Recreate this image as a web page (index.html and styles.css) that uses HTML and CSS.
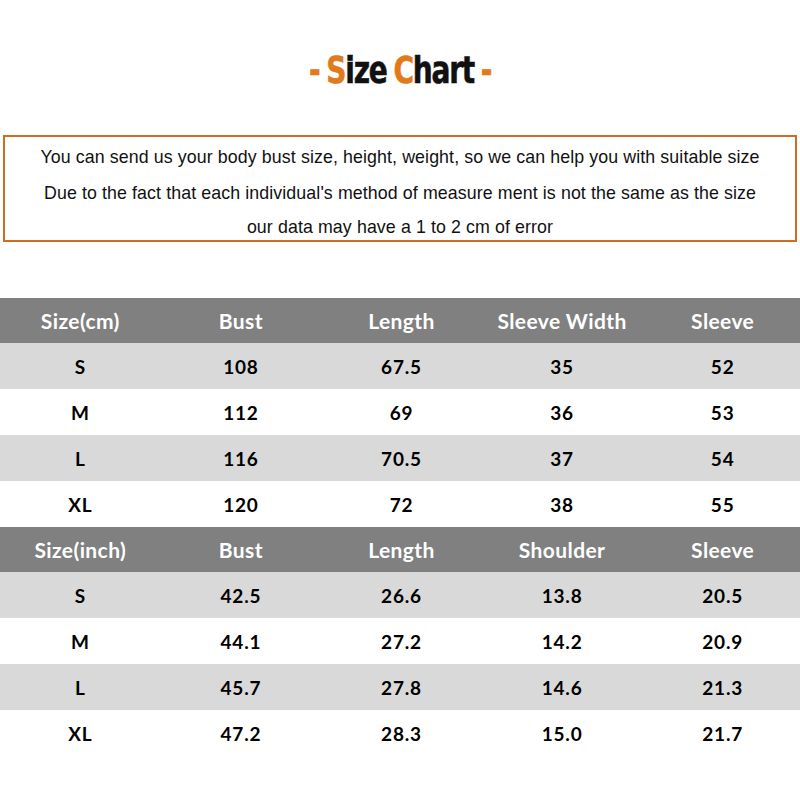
FILE: index.html
```html
<!DOCTYPE html>
<html>
<head>
<meta charset="utf-8">
<link rel="stylesheet" href="styles.css">
</head>
<body>
<div class="page">
  <div class="title-wrap">
    <h1 class="title"><span class="or">-</span> <span class="or">S</span>ize <span class="or">C</span>hart <span class="or">-</span></h1>
  </div>
  <div class="note">
    <p>You can send us your body bust size, height, weight, so we can help you with suitable size</p>
    <p>Due to the fact that each individual's method of measure ment is not the same as the size</p>
    <p>our data may have a 1 to 2 cm of error</p>
  </div>
  <div class="table">
    <div class="row head"><span>Size(cm)</span><span>Bust</span><span>Length</span><span>Sleeve Width</span><span>Sleeve</span></div>
    <div class="row alt"><span>S</span><span>108</span><span>67.5</span><span>35</span><span>52</span></div>
    <div class="row"><span>M</span><span>112</span><span>69</span><span>36</span><span>53</span></div>
    <div class="row alt"><span>L</span><span>116</span><span>70.5</span><span>37</span><span>54</span></div>
    <div class="row"><span>XL</span><span>120</span><span>72</span><span>38</span><span>55</span></div>
    <div class="row head"><span>Size(inch)</span><span>Bust</span><span>Length</span><span>Shoulder</span><span>Sleeve</span></div>
    <div class="row alt"><span>S</span><span>42.5</span><span>26.6</span><span>13.8</span><span>20.5</span></div>
    <div class="row"><span>M</span><span>44.1</span><span>27.2</span><span>14.2</span><span>20.9</span></div>
    <div class="row alt"><span>L</span><span>45.7</span><span>27.8</span><span>14.6</span><span>21.3</span></div>
    <div class="row"><span>XL</span><span>47.2</span><span>28.3</span><span>15.0</span><span>21.7</span></div>
  </div>
</div>
</body>
</html>
```

FILE: styles.css
```css
* { box-sizing: border-box; }
html, body { margin: 0; padding: 0; background: #fff; }
.page { width: 800px; height: 800px; overflow: hidden; display: flex; flex-direction: column; }
.title-wrap {
  height: 135px;
  padding-top: 45px;
  display: flex;
  justify-content: center;
  align-items: flex-start;
}
.title {
  margin: 0;
  font-family: "DejaVu Sans", sans-serif;
  font-stretch: condensed;
  font-weight: 900;
  font-size: 38px;
  line-height: 50px;
  color: #111;
  letter-spacing: -1.5px;
  word-spacing: -2px;
  transform: scaleX(0.82);
  white-space: nowrap;
  -webkit-text-stroke: 0.6px currentColor;
}
.title .or { color: #e07a1c; }
.note {
  margin: 0 3px;
  height: 107px;
  border: 2px solid #cf6d1f;
  display: flex;
  flex-direction: column;
  align-items: center;
  padding-top: 2px;
  font-family: "Liberation Sans", sans-serif;
  font-size: 17.8px;
  color: #111;
  letter-spacing: 0.1px;
}
.note p { margin: 0; line-height: 36px; height: 36px; }
.note p:last-child { height: auto; line-height: 32px; }
.table { margin-top: 56px; display: flex; flex-direction: column; }
.row {
  display: grid;
  grid-template-columns: repeat(5, 160.6px);
  height: 46px;
  align-items: center;
  font-family: Lato, sans-serif;
  font-weight: bold;
  font-size: 19px;
  letter-spacing: 0.8px;
  color: #000;
  background: #fff;
}
.row span { text-align: center; }
.row.alt { background: #d9d9d9; }
.row.head { background: #808080; color: #fff; font-size: 21px; letter-spacing: 0.4px; height: 45px; }
```
